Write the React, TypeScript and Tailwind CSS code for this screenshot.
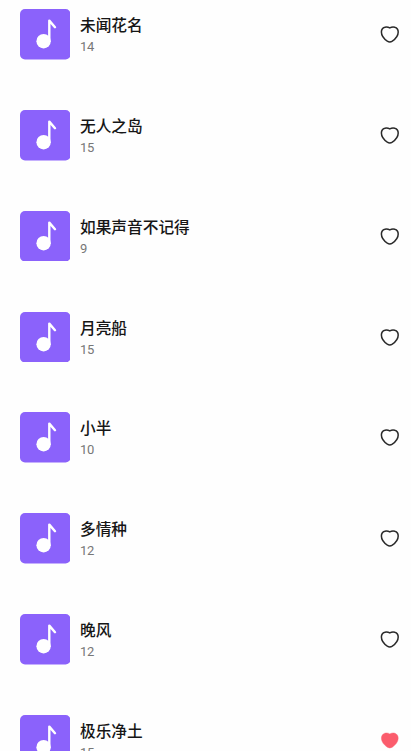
import type { SVGProps } from "react";

type Song = {
  title: string;
  count: number;
  liked?: boolean;
};

const songs: Song[] = [
  { title: "未闻花名", count: 14 },
  { title: "无人之岛", count: 15 },
  { title: "如果声音不记得", count: 9 },
  { title: "月亮船", count: 15 },
  { title: "小半", count: 10 },
  { title: "多情种", count: 12 },
  { title: "晚风", count: 12 },
  { title: "极乐净土", count: 15, liked: true },
];

export default function App() {
  return (
    <main className="h-screen overflow-hidden bg-[#fefefe] pt-[9.3px] font-['Roboto','Noto_Sans_CJK_SC',sans-serif]">
      <ul>
        {songs.map((song) => (
          <SongRow key={song.title} song={song} />
        ))}
      </ul>
    </main>
  );
}

function SongRow({ song }: { song: Song }) {
  return (
    <li className="flex h-[100.8px] items-start pr-[11px] pl-[19.5px]">
      <IconNote className="size-[50.5px] shrink-0" />

      <div className="ml-2.5 min-w-0 flex-1 pt-[4.9px]">
        <h3 className="truncate font-['Noto_Sans_CJK_SC',sans-serif] text-[15.7px] leading-[22px] font-medium text-[#161616]">
          {song.title}
        </h3>
        <p className="text-[13px] leading-[22px] tracking-[-0.4px] text-[#777]">{song.count}</p>
      </div>

      <button type="button" className="mt-4 shrink-0">
        <IconHeart
          className={song.liked ? "h-[19px] w-5 text-[#fb5c6c]" : "h-[19px] w-5 text-[#2a2a2a]"}
          fill={song.liked ? "currentColor" : "none"}
          strokeWidth={song.liked ? 0.4 : 1.5}
        />
      </button>
    </li>
  );
}

function IconNote(props: SVGProps<SVGSVGElement>) {
  return (
    <svg viewBox="0 0 50.5 50.5" fill="none" {...props}>
      <rect width="50.5" height="50.5" rx="5" fill="#8b62fb" />
      <circle cx="23.6" cy="32.2" r="7.2" fill="#fff" />
      <path
        d="M29.3 32V11.6L35 18.2"
        stroke="#fff"
        strokeWidth="2.4"
        strokeLinecap="round"
        strokeLinejoin="round"
      />
    </svg>
  );
}

function IconHeart(props: SVGProps<SVGSVGElement>) {
  return (
    <svg viewBox="0 0 20 19" stroke="currentColor" strokeLinejoin="round" {...props}>
      <path d="M9.8 2.9C8.3 2 6.4 1.7 4.8 2.2C2.7 2.8 1.4 4.7 1.4 7.1C1.4 11.1 4.2 14.1 7.3 16.2Q9.8 17.8 12.3 16.2C15.4 14.1 18.2 11.1 18.2 7.1C18.2 4.7 16.9 2.8 14.8 2.2C13.2 1.7 11.3 2 9.8 2.9Z" />
    </svg>
  );
}
